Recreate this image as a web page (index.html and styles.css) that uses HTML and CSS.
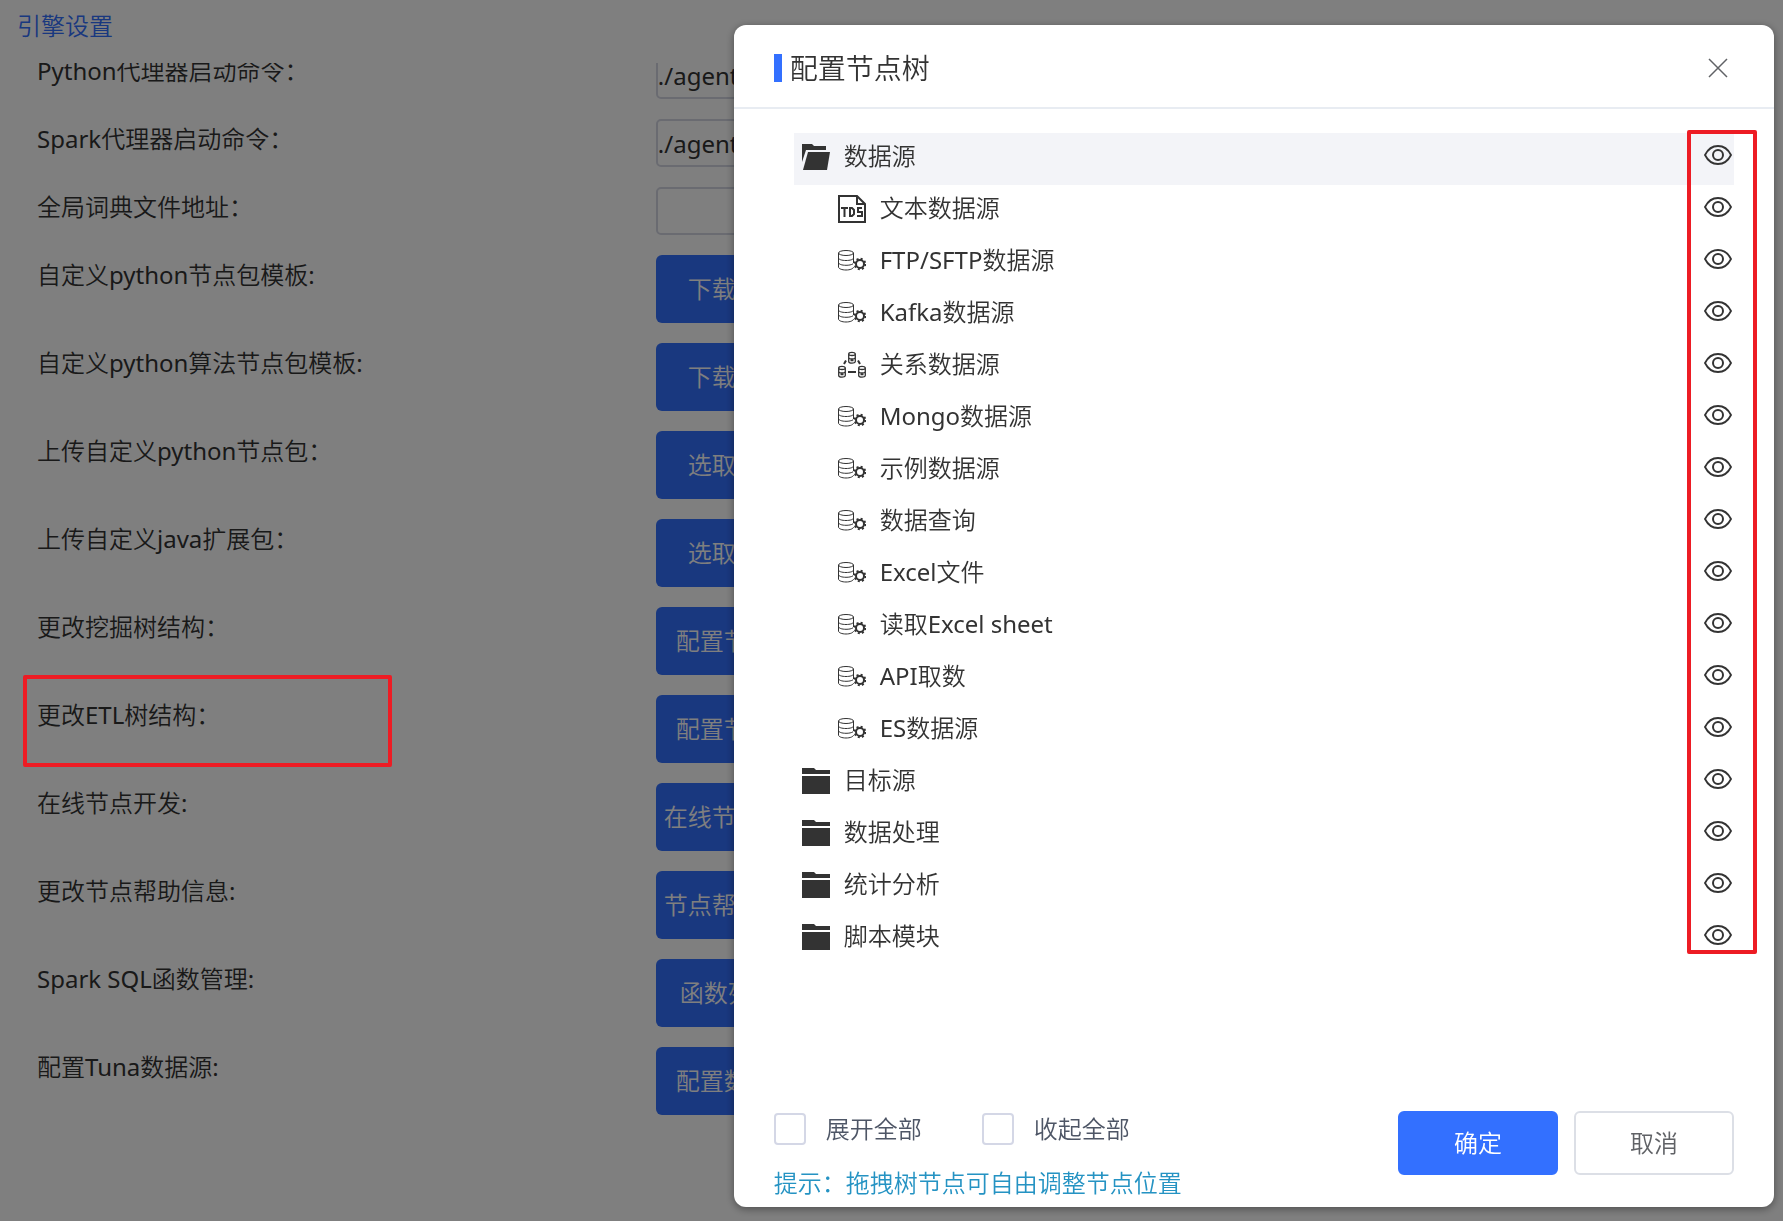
FILE: index.html
```html
<!DOCTYPE html>
<html lang="zh-CN">
<head>
    <meta charset="utf-8">
    <title>引擎设置</title>
    <link rel="stylesheet" href="styles.css">
</head>
<body>
    <!-- 图标 -->
    <svg class="sprite" aria-hidden="true">
        <symbol id="folder-open" viewBox="0 0 28 28">
            <path d="M0 1h10l2 2h12v4H4L0 19z"/>
            <path d="M6 9h22l-3 18H1z"/>
        </symbol>
        <symbol id="folder" viewBox="0 0 28 28">
            <path d="M0 1h12l2 2h14v4H0zM0 9h28v18H0z"/>
        </symbol>
        <symbol id="tds" viewBox="0 0 28 28">
            <path d="M1 1h18l8 8v18H1zM19 1v8h8" fill="none" stroke="currentColor" stroke-width="2"/>
            <path d="M3 13h7M6.500 13v9M12 13v8h2l2-2v-4l-2-2zM24 13h-4v4h4v4h-5" fill="none" stroke="currentColor" stroke-width="2"/>
        </symbol>
        <symbol id="db" viewBox="0 0 28 28">
            <g fill="none" stroke="currentColor">
                <ellipse cx="8" cy="6" rx="7.500" ry="2.500"/>
                <path d="M.5 6v14c0 1.700 3.400 3 7.500 3s7.500-1.300 7.500-3M15.500 6v10M.5 11c0 1.500 3.400 2.500 7.500 2.500s7.500-1 7.500-2.500M.5 15.500c0 1.700 3.400 2.800 7.500 2.800 3 0 5.500-.5 7-1.500"/>
                <circle cx="22" cy="17" r="4" stroke-width="2"/>
                <circle cx="22" cy="17" r="5.300" stroke-width="2" stroke-dasharray="2 2.160"/>
            </g>
        </symbol>
        <symbol id="relation" viewBox="0 0 28 28">
            <g fill="none" stroke="currentColor" stroke-width="1.300">
                <path id="can" d="M10.700 3v7.500c0 2.200 6.600 2.200 6.600 0V3c0-2.200-6.600-2.200-6.600 0 0 2 6.600 2 6.600 0M10.700 6.500c0 2 6.600 2 6.600 0M12.500 9.500h3"/>
                <use href="#can" x="-10" y="14"/>
                <use href="#can" x="10" y="14"/>
                <path d="M10 21h8M8 9.500l-2 3.500M20 9.500l2 3.500" stroke-width="2"/>
            </g>
        </symbol>
        <symbol id="eye" viewBox="0 0 28 20">
            <path d="M1 10C7-2 21-2 27 10 21 22 7 22 1 10z" fill="none" stroke="currentColor" stroke-width="1.800"/>
            <circle cx="14" cy="10" r="5" fill="none" stroke="currentColor" stroke-width="2"/>
        </symbol>
    </svg>

    <div class="page">
        <h1 class="page-title">引擎设置</h1>
        <div class="settings">
            <div class="settings-list">
                <div class="row"><label for="python-cmd">Python代理器启动命令：</label><input class="text-input" id="python-cmd" type="text" value="./agent.sh"></div>
                <div class="row"><label for="spark-cmd">Spark代理器启动命令：</label><input class="text-input" id="spark-cmd" type="text" value="./agent.sh"></div>
                <div class="row"><label for="dict-path">全局词典文件地址：</label><input class="text-input" id="dict-path" type="text"></div>
                <div class="row"><label for="b1">自定义python节点包模板:</label><button class="btn" id="b1">下载模板</button></div>
                <div class="row"><label for="b2">自定义python算法节点包模板:</label><button class="btn" id="b2">下载模板</button></div>
                <div class="row"><label for="b3">上传自定义python节点包：</label><button class="btn" id="b3">选取文件</button></div>
                <div class="row"><label for="b4">上传自定义java扩展包：</label><button class="btn" id="b4">选取文件</button></div>
                <div class="row"><label for="b5">更改挖掘树结构：</label><button class="btn" id="b5">配置节点树</button></div>
                <div class="row"><label for="b6">更改ETL树结构：</label><button class="btn" id="b6">配置节点树</button></div>
                <div class="row"><label for="b7">在线节点开发:</label><button class="btn" id="b7">在线节点开发</button></div>
                <div class="row"><label for="b8">更改节点帮助信息:</label><button class="btn" id="b8">节点帮助信息</button></div>
                <div class="row"><label for="b9">Spark SQL函数管理:</label><button class="btn btn-narrow" id="b9">函数列表</button></div>
                <div class="row"><label for="b10">配置Tuna数据源:</label><button class="btn" id="b10">配置数据源</button></div>
            </div>
        </div>
    </div>

    <div class="overlay">
        <div class="dialog" role="dialog" aria-labelledby="dialog-title">
            <div class="dialog-header">
                <h2 class="dialog-title" id="dialog-title">配置节点树</h2>
                <button class="close" aria-label="关闭">
                    <svg viewBox="0 0 20 20"><path d="M1 1l18 18M19 1L1 19" fill="none" stroke="currentColor" stroke-width="1.500"/></svg>
                </button>
            </div>
            <div class="dialog-body">
                <div class="tree">
                    <ul class="tree-list" id="tree"></ul>
                    <div class="mark mark-eyes"></div>
                </div>
            </div>
            <div class="dialog-footer">
                <div>
                    <div class="checks">
                        <label class="check"><input type="checkbox">展开全部</label>
                        <label class="check"><input type="checkbox">收起全部</label>
                    </div>
                    <p class="tip">提示：拖拽树节点可自由调整节点位置</p>
                </div>
                <div class="actions">
                    <button class="action action-primary">确定</button>
                    <button class="action">取消</button>
                </div>
            </div>
        </div>
        <div class="mark mark-etl"></div>
    </div>

    <script src="tree.js"></script>
</body>
</html>
```

FILE: styles.css
```css
* {
    box-sizing: border-box;
}

body {
    margin: 0;
    background: #fff;
    color: #333;
    font-family: "Noto Sans", "Noto Sans CJK SC DemiLight", "Noto Sans CJK SC", sans-serif;
    font-size: 24px;
    font-weight: 400;
    line-height: 40px;
}

button, input {
    font: inherit;
    color: inherit;
}

.sprite {
    position: absolute;
    width: 0;
    height: 0;
}

.page {
    height: 100vh;
    overflow: hidden;
}

.page-title {
    margin: 0;
    padding: 6px 17px 17px;
    color: #3370ff;
    font-size: 24px;
    font-weight: 400;
}

/* 列表已向下滚动一点 */
.settings {
    overflow: hidden;
    padding: 0 2px 0 37px;
}

.settings-list {
    display: flex;
    flex-direction: column;
    gap: 20px;
    margin-top: -12px;
}

.row {
    display: grid;
    grid-template-columns: 11fr 20fr;
    align-items: start;
}

.text-input {
    width: 400px;
    height: 48px;
    padding: 0;
    border: 2px solid #d4d7e3;
    border-radius: 5px;
    background: #fff;
}

.btn {
    justify-self: start;
    width: 160px;
    height: 68px;
    padding: 0;
    border: none;
    border-radius: 6px;
    background: #3370ff;
    color: #fff;
}

.btn-narrow {
    width: 144px;
}

.overlay {
    position: fixed;
    inset: 0;
    display: flex;
    justify-content: flex-end;
    padding: 25px 9px 14px;
    background: rgba(0, 0, 0, 0.5);
}

.dialog {
    display: flex;
    flex-direction: column;
    width: calc(59% - 1px);
    border-radius: 12px;
    background: #fff;
    box-shadow: 0 2px 8px rgba(0, 0, 0, 0.4);
}

.dialog-header {
    display: flex;
    align-items: center;
    justify-content: space-between;
    height: 84px;
    padding: 4px 40px 0;
    border-bottom: 2px solid #e8ecf2;
}

.dialog-title {
    display: flex;
    align-items: center;
    gap: 8px;
    margin: 0;
    font-size: 28px;
    font-weight: 400;
}

.dialog-title::before {
    content: "";
    width: 8px;
    height: 28px;
    background: #3370ff;
}

.close {
    display: flex;
    padding: 6px;
    border: none;
    background: none;
    color: #606266;
}

.close svg {
    width: 20px;
    height: 20px;
}

.dialog-body {
    flex: 1;
    padding: 24px 40px 0 60px;
}

.tree {
    position: relative;
}

.tree-list {
    margin: 0;
    padding: 0;
    list-style: none;
}

.node {
    display: flex;
    align-items: center;
    height: 52px;
    padding: 0 2px 6px 8px;
}

.node.active {
    background: #f3f4f8;
}

.node.child {
    padding-left: 44px;
}

.icon {
    width: 28px;
    height: 28px;
    margin: 2px 14px 0 0;
    fill: currentColor;
}

.node-name {
    flex: 1;
}

.eye {
    display: flex;
    padding: 0 0 2px;
    border: none;
    background: none;
}

.eye svg {
    width: 28px;
    height: 20px;
}

.dialog-footer {
    display: flex;
    justify-content: space-between;
    padding: 0 40px 4px;
}

.checks {
    display: flex;
    gap: 60px;
}

.check {
    display: flex;
    align-items: center;
    gap: 20px;
    height: 36px;
    color: #4e5666;
}

.check input {
    appearance: none;
    width: 32px;
    height: 32px;
    margin: 0;
    border: 2px solid #d4d7e6;
    border-radius: 4px;
    background: #fff;
}

.tip {
    margin: 16px 0 0;
    color: #2593c3;
}

.actions {
    display: flex;
    gap: 16px;
}

.action {
    width: 160px;
    height: 64px;
    padding: 0;
    border: 2px solid #dcdfe6;
    border-radius: 6px;
    background: #fff;
    color: #606266;
}

.action-primary {
    border-color: #3370ff;
    background: #3370ff;
    color: #fff;
}

/* 红色标注框 */
.mark {
    position: absolute;
    border: 4px solid #ed1c24;
    border-radius: 2px;
    pointer-events: none;
}

.mark-eyes {
    top: -3px;
    right: -23px;
    bottom: 11px;
    width: 70px;
}

.mark-etl {
    top: 675px;
    left: 23px;
    width: 369px;
    height: 92px;
}
```

FILE: tree.js
```js
const nodes = [
    ["数据源", "folder-open"],
    ["文本数据源", "tds"],
    ["FTP/SFTP数据源", "db"],
    ["Kafka数据源", "db"],
    ["关系数据源", "relation"],
    ["Mongo数据源", "db"],
    ["示例数据源", "db"],
    ["数据查询", "db"],
    ["Excel文件", "db"],
    ["读取Excel sheet", "db"],
    ["API取数", "db"],
    ["ES数据源", "db"],
    ["目标源", "folder"],
    ["数据处理", "folder"],
    ["统计分析", "folder"],
    ["脚本模块", "folder"]
];

const tree = document.getElementById("tree");

nodes.forEach(function ([name, icon]) {
    const item = document.createElement("li");
    item.className = "node";
    if (icon === "folder-open") {
        item.classList.add("active");
    } else if (icon !== "folder") {
        item.classList.add("child");
    }
    item.innerHTML =
        '<svg class="icon"><use href="#' + icon + '"/></svg>' +
        '<span class="node-name">' + name + '</span>' +
        '<button class="eye" aria-label="显示或隐藏"><svg><use href="#eye"/></svg></button>';
    tree.appendChild(item);
});
```
